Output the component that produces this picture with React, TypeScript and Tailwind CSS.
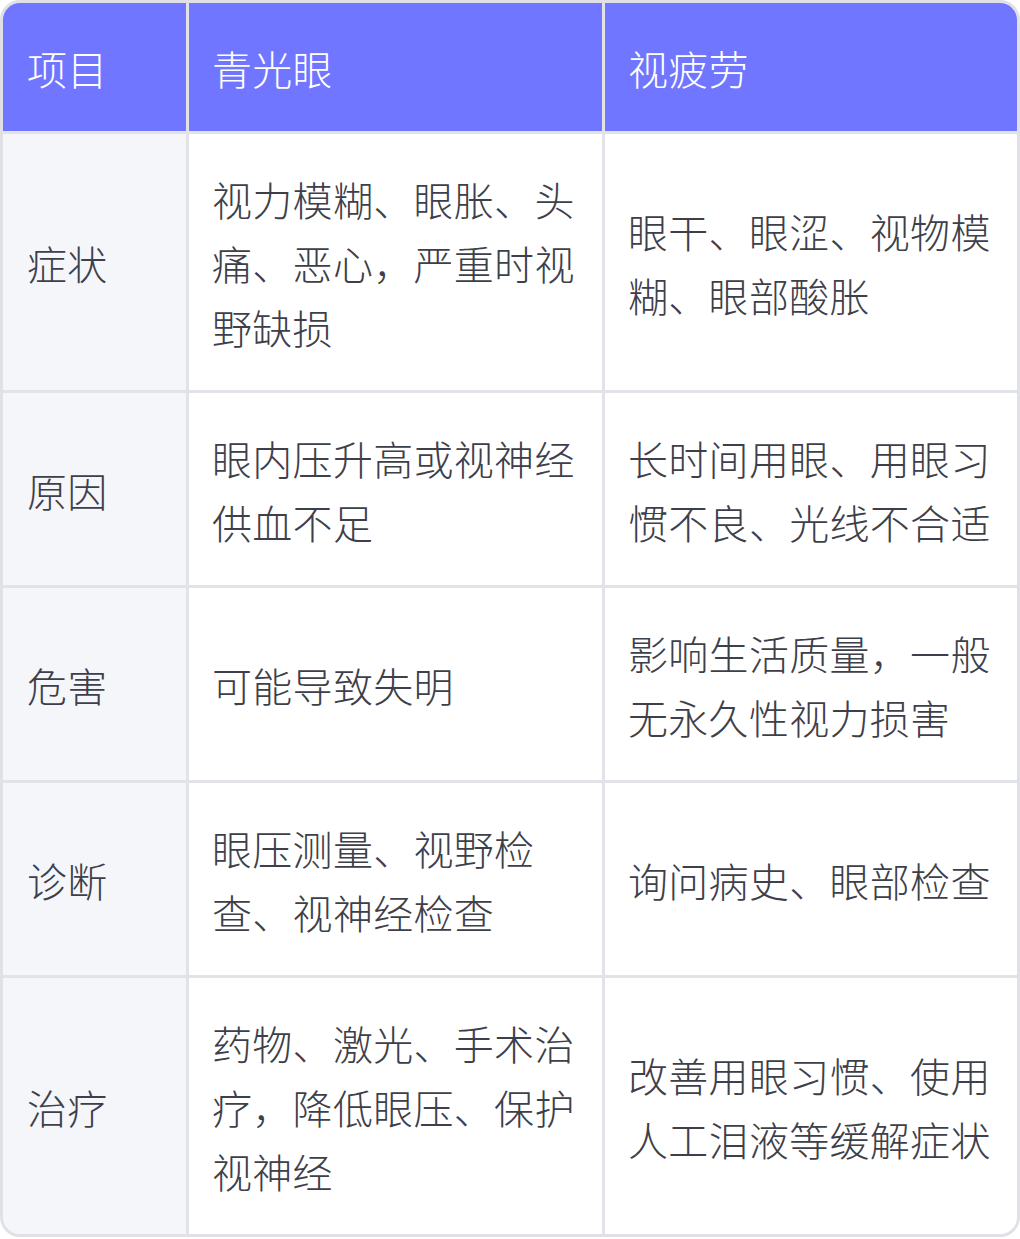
const rows = [
  {
    label: '症状',
    a: '视力模糊、眼胀、头痛、恶心，严重时视野缺损',
    b: '眼干、眼涩、视物模糊、眼部酸胀',
  },
  {
    label: '原因',
    a: '眼内压升高或视神经供血不足',
    b: '长时间用眼、用眼习惯不良、光线不合适',
  },
  {
    label: '危害',
    a: '可能导致失明',
    b: '影响生活质量，一般无永久性视力损害',
  },
  {
    label: '诊断',
    a: '眼压测量、视野检查、视神经检查',
    b: '询问病史、眼部检查',
  },
  {
    label: '治疗',
    a: '药物、激光、手术治疗，降低眼压、保护视神经',
    b: '改善用眼习惯、使用人工泪液等缓解症状',
  },
];

export default function App() {
  return (
    <div className="w-[1020px] bg-white font-['Noto_Sans_CJK_SC','Noto_Sans',sans-serif] font-light">
      <div className="overflow-hidden rounded-[20px] border-[3px] border-[#e0e1e6]">
        <div className="grid grid-cols-[183px_413px_412px] gap-[3px] bg-[#e2e3e8] text-[40px] leading-[64px] tracking-[0.3px]">
          {/* header */}
          <div className="flex items-center bg-[#7076ff] px-6 pt-[33px] pb-[31px] text-white">项目</div>
          <div className="flex items-center bg-[#7076ff] pl-[23px] pr-6 pt-[33px] pb-[31px] text-white">青光眼</div>
          <div className="flex items-center bg-[#7076ff] pl-[23px] pr-6 pt-[33px] pb-[31px] text-white">视疲劳</div>

          {rows.map((r) => (
            <div key={r.label} className="contents">
              <div className="flex items-center bg-[#f5f6fa] px-6 pt-[33px] pb-[31px] text-[#3d404a]">{r.label}</div>
              <div className="flex items-center bg-white pl-[23px] pr-6 pt-[33px] pb-[31px] text-[#3d404a]">{r.a}</div>
              <div className="flex items-center bg-white pl-[23px] pr-6 pt-[33px] pb-[31px] text-[#3d404a]">{r.b}</div>
            </div>
          ))}
        </div>
      </div>
    </div>
  );
}
